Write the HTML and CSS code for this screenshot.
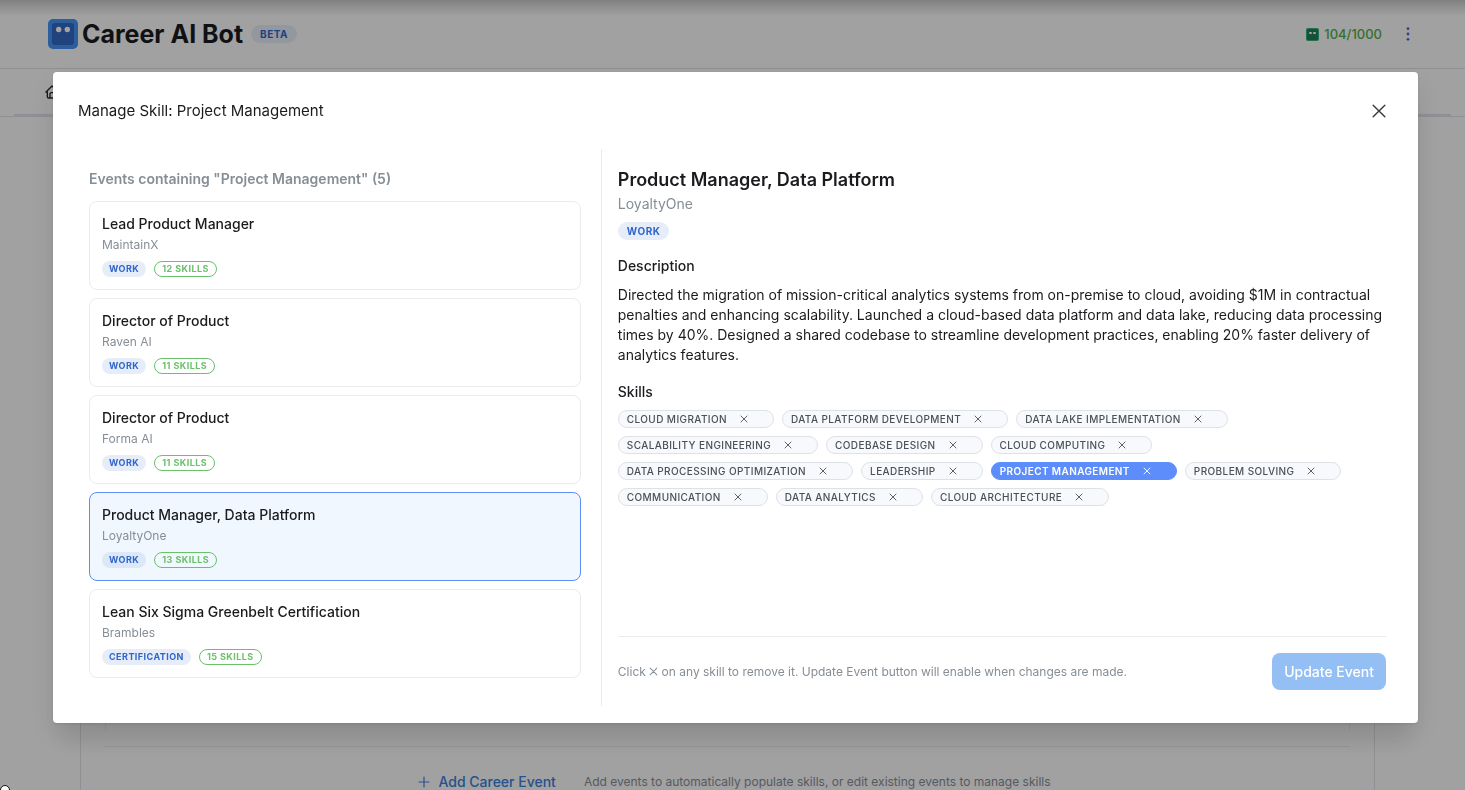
FILE: index.html
```html
<!DOCTYPE html>
<html lang="en">
<head>
    <meta charset="UTF-8">
    <meta name="viewport" content="width=device-width, initial-scale=1.0">
    <title>Career AI Bot</title>
    <link rel="stylesheet" href="styles.css">
</head>
<body>

<svg width="0" height="0" class="sprite" aria-hidden="true">
    <symbol id="x" viewBox="0 0 12 12">
        <path d="M1 1L11 11M11 1L1 11" fill="none" stroke="currentColor" stroke-width="1.200" stroke-linecap="round"/>
    </symbol>
    <symbol id="x-small" viewBox="0 0 8 8">
        <path d="M1 1L7 7M7 1L1 7" fill="none" stroke="currentColor" stroke-width=".9" stroke-linecap="round"/>
    </symbol>
</svg>

<div class="page">
    <header class="header">
        <svg class="logo" viewBox="0 0 30 30" aria-hidden="true">
            <rect width="30" height="30" rx="5" fill="#4293f5"/>
            <rect x="4" y="4" width="22" height="22" rx="3" fill="#3268c4"/>
            <circle cx="10.700" cy="10.500" r="2.700" fill="#fff"/>
            <circle cx="19.300" cy="10.500" r="2.700" fill="#fff"/>
        </svg>
        <h1 class="brand">Career AI Bot</h1>
        <span class="badge badge-beta">Beta</span>
        <div class="usage">
            <svg width="13" height="13" viewBox="0 0 13 13" aria-hidden="true">
                <rect width="13" height="13" rx="2" fill="#37b27c"/>
                <rect x="1" y="1" width="11" height="11" rx="1" fill="#257f5b"/>
                <rect x="3" y="4" width="3" height="2" rx="1" fill="#fff"/>
                <rect x="7" y="4" width="3" height="2" rx="1" fill="#fff"/>
            </svg>
            <span>104/1000</span>
        </div>
        <button class="menu" type="button" aria-label="Menu">
            <svg width="4" height="14" viewBox="0 0 4 14" fill="#5060e8">
                <circle cx="2" cy="1.700" r="1.400"/><circle cx="2" cy="7" r="1.400"/><circle cx="2" cy="12.300" r="1.400"/>
            </svg>
        </button>
    </header>
    <nav class="nav">
        <a href="#" class="home" aria-label="Home">
            <svg width="16" height="16" viewBox="0 0 24 24" fill="none" stroke="currentColor" stroke-width="2" stroke-linecap="round" stroke-linejoin="round">
                <path d="M5 12H3l9-9 9 9h-2M5 12v7a2 2 0 0 0 2 2h10a2 2 0 0 0 2-2v-7M9 21v-6a2 2 0 0 1 2-2h2a2 2 0 0 1 2 2v6"/>
            </svg>
        </a>
    </nav>
    <main class="main">
        <div class="events">
            <div class="events-list"></div>
            <div class="events-footer">
                <button class="add" type="button">
                    <svg width="12" height="12" viewBox="0 0 12 12" aria-hidden="true"><path d="M6 1v10M1 6h10" stroke="currentColor" stroke-width="1.200" stroke-linecap="round"/></svg>
                    Add Career Event
                </button>
                <span class="add-hint">Add events to automatically populate skills, or edit existing events to manage skills</span>
            </div>
        </div>
    </main>
</div>

<div class="overlay">
    <section class="modal" role="dialog" aria-labelledby="modalTitle">
        <header class="modal-header">
            <h2 id="modalTitle" class="modal-title">Manage Skill: Project Management</h2>
            <button class="close" type="button" aria-label="Close"><svg width="14" height="14"><use href="#x"/></svg></button>
        </header>
        <div class="modal-body">
            <div class="left">
                <h3 class="left-title">Events containing "Project Management" (5)</h3>
                <div class="cards">
                    <button class="card" type="button">
                        <span class="card-title">Lead Product Manager</span>
                        <span class="card-org">MaintainX</span>
                        <span class="badges"><span class="badge badge-sm">Work</span><span class="badge badge-sm badge-green">12 skills</span></span>
                    </button>
                    <button class="card" type="button">
                        <span class="card-title">Director of Product</span>
                        <span class="card-org">Raven AI</span>
                        <span class="badges"><span class="badge badge-sm">Work</span><span class="badge badge-sm badge-green">11 skills</span></span>
                    </button>
                    <button class="card" type="button">
                        <span class="card-title">Director of Product</span>
                        <span class="card-org">Forma AI</span>
                        <span class="badges"><span class="badge badge-sm">Work</span><span class="badge badge-sm badge-green">11 skills</span></span>
                    </button>
                    <button class="card active" type="button">
                        <span class="card-title">Product Manager, Data Platform</span>
                        <span class="card-org">LoyaltyOne</span>
                        <span class="badges"><span class="badge badge-sm">Work</span><span class="badge badge-sm badge-green">13 skills</span></span>
                    </button>
                    <button class="card" type="button">
                        <span class="card-title">Lean Six Sigma Greenbelt Certification</span>
                        <span class="card-org">Brambles</span>
                        <span class="badges"><span class="badge badge-sm">Certification</span><span class="badge badge-sm badge-green">15 skills</span></span>
                    </button>
                </div>
            </div>
            <div class="right">
                <h3 class="event-title">Product Manager, Data Platform</h3>
                <p class="event-org">LoyaltyOne</p>
                <span class="badge event-type">Work</span>
                <h4 class="label">Description</h4>
                <p class="description">Directed the migration of mission-critical analytics systems from on-premise to cloud, avoiding $1M in contractual penalties and enhancing scalability. Launched a cloud-based data platform and data lake, reducing data processing times by 40%. Designed a shared codebase to streamline development practices, enabling 20% faster delivery of analytics features.</p>
                <h4 class="label">Skills</h4>
                <div class="skills">
                    <span class="skill">Cloud Migration<button type="button" aria-label="Remove Cloud Migration"><svg width="8" height="8"><use href="#x-small"/></svg></button></span>
                    <span class="skill">Data Platform Development<button type="button" aria-label="Remove Data Platform Development"><svg width="8" height="8"><use href="#x-small"/></svg></button></span>
                    <span class="skill">Data Lake Implementation<button type="button" aria-label="Remove Data Lake Implementation"><svg width="8" height="8"><use href="#x-small"/></svg></button></span>
                    <span class="skill">Scalability Engineering<button type="button" aria-label="Remove Scalability Engineering"><svg width="8" height="8"><use href="#x-small"/></svg></button></span>
                    <span class="skill">Codebase Design<button type="button" aria-label="Remove Codebase Design"><svg width="8" height="8"><use href="#x-small"/></svg></button></span>
                    <span class="skill">Cloud Computing<button type="button" aria-label="Remove Cloud Computing"><svg width="8" height="8"><use href="#x-small"/></svg></button></span>
                    <span class="skill">Data Processing Optimization<button type="button" aria-label="Remove Data Processing Optimization"><svg width="8" height="8"><use href="#x-small"/></svg></button></span>
                    <span class="skill">Leadership<button type="button" aria-label="Remove Leadership"><svg width="8" height="8"><use href="#x-small"/></svg></button></span>
                    <span class="skill selected">Project Management<button type="button" aria-label="Remove Project Management"><svg width="8" height="8"><use href="#x-small"/></svg></button></span>
                    <span class="skill">Problem Solving<button type="button" aria-label="Remove Problem Solving"><svg width="8" height="8"><use href="#x-small"/></svg></button></span>
                    <span class="skill">Communication<button type="button" aria-label="Remove Communication"><svg width="8" height="8"><use href="#x-small"/></svg></button></span>
                    <span class="skill">Data Analytics<button type="button" aria-label="Remove Data Analytics"><svg width="8" height="8"><use href="#x-small"/></svg></button></span>
                    <span class="skill">Cloud Architecture<button type="button" aria-label="Remove Cloud Architecture"><svg width="8" height="8"><use href="#x-small"/></svg></button></span>
                </div>
                <footer class="actions">
                    <p class="hint">Click <svg width="9" height="9" role="img" aria-label="remove"><use href="#x-small"/></svg> on any skill to remove it. Update Event button will enable when changes are made.</p>
                    <button class="update" type="button" disabled>Update Event</button>
                </footer>
            </div>
        </div>
    </section>
    <span class="dot"></span>
</div>

</body>
</html>
```

FILE: styles.css
```css
* {
    box-sizing: border-box;
}

body {
    margin: 0;
    font-family: Inter, "Liberation Sans", sans-serif;
    font-size: 14px;
    line-height: 20px;
    color: #1a1b1e;
}

h1, h2, h3, h4, p {
    margin: 0;
    font-weight: 400;
}

button {
    font: inherit;
    color: inherit;
    background: none;
    border: 0;
    padding: 0;
}

.sprite {
    position: absolute;
}

/* page behind the modal */
.page {
    display: flex;
    flex-direction: column;
    height: 100vh;
    overflow: hidden;
    background: #fcfcfc;
}

.header {
    display: flex;
    align-items: center;
    height: 69px;
    padding: 0 52px 0 48px;
    border-bottom: 1px solid #dee2e6;
}

.logo {
    width: 30px;
    height: 30px;
}

.brand {
    margin-left: 4px;
    font-size: 25px;
    line-height: 32px;
    font-weight: 700;
}

.usage {
    display: flex;
    align-items: center;
    gap: 5px;
    margin-left: auto;
    font-size: 13px;
    font-weight: 500;
    color: #51b04c;
}

.menu {
    display: flex;
    justify-content: center;
    width: 10px;
    margin-left: 21px;
}

.nav {
    display: flex;
    align-items: center;
    height: 48px;
    padding: 0 0 2px 44px;
    border-bottom: 1px solid #dee2e6;
    background:
        linear-gradient(#dee2e6, #dee2e6) 50% 100% / calc(100% - 28px) 2px no-repeat;
}

.home {
    display: flex;
    color: #212529;
}

.main {
    display: flex;
    flex: 1;
    padding: 0 90px 0 80px;
}

.events {
    display: flex;
    flex: 1;
    flex-direction: column;
    padding: 0 24px;
    border: solid #dee2e6;
    border-width: 0 1px;
}

.events-list {
    flex: 1;
    margin-bottom: 16px;
    border: solid #e9ecef;
    border-width: 0 1px;
}

.events-footer {
    display: flex;
    align-items: flex-start;
    justify-content: center;
    gap: 28px;
    height: 44px;
    padding: 25px 0 0 14px;
    border-top: 1px solid #e9ecef;
}

.add {
    display: flex;
    align-items: center;
    gap: 8px;
    font-weight: 500;
    color: #3a80e0;
}

.add-hint {
    font-size: 12px;
    color: #868e96;
}

/* badges */
.badge {
    display: inline-flex;
    align-items: center;
    height: 18px;
    padding: 0 9px;
    border-radius: 9px;
    font-size: 10px;
    font-weight: 700;
    letter-spacing: .05em;
    text-transform: uppercase;
    color: #2f66cc;
    background: #e7edf8;
}

.badge-beta {
    margin-left: 8px;
}

.badge-sm {
    height: 16px;
    padding: 0 7px;
    font-size: 9px;
}

.badge-green {
    border: 1px solid #6ac16a;
    color: #6ac16a;
    background: none;
}

/* modal */
.overlay {
    position: fixed;
    inset: 0;
    display: flex;
    align-items: flex-start;
    padding: 72px 47px 0 53px;
    background:
        linear-gradient(rgba(0, 0, 0, .2), transparent 16px),
        rgba(0, 0, 0, .36);
}

.modal {
    flex: 1;
    min-width: 0;
    border-radius: 4px;
    background: #fff;
    box-shadow: 0 1px 3px rgba(0, 0, 0, .1), 0 28px 23px -7px rgba(0, 0, 0, .06), 0 12px 30px rgba(0, 0, 0, .1);
}

.modal-header {
    display: flex;
    align-items: center;
    justify-content: space-between;
    height: 77px;
    padding: 0 32px 0 25px;
}

.modal-title {
    font-size: 15px;
}

.close {
    display: flex;
    color: #343a40;
}

.modal-body {
    display: grid;
    grid-template-columns: 2fr 3fr;
    padding: 0 32px 17px 26px;
}

.left {
    padding: 20px 20px 28px 10px;
    border-right: 1px solid #e9ecef;
}

.left-title {
    font-size: 14px;
    font-weight: 600;
    color: #868e96;
}

.cards {
    display: flex;
    flex-direction: column;
    gap: 8px;
    margin-top: 12px;
}

.card {
    display: flex;
    flex-direction: column;
    padding: 12px;
    border: 1px solid #e9ecef;
    border-radius: 8px;
    text-align: left;
    background: #fff;
}

.card.active {
    border-color: #5c8dfa;
    background: #f0f7ff;
}

.card.active .badge:first-child {
    background: #dce8f8;
}

.card-title {
    font-weight: 500;
}

.card-org {
    margin-top: 1px;
    font-size: 12px;
    color: #868e96;
}

.badges {
    display: flex;
    gap: 8px;
    margin-top: 6px;
}

.right {
    display: flex;
    flex-direction: column;
    padding: 20px 0 0 16px;
}

.event-title {
    font-size: 18px;
    line-height: 22px;
    font-weight: 600;
}

.event-org {
    margin-top: 3px;
    color: #868e96;
}

.event-type {
    align-self: flex-start;
    margin-top: 8px;
}

.label {
    margin-top: 16px;
    font-size: 14px;
    font-weight: 500;
}

.description {
    margin: 9px 0 1px;
}

.skills {
    display: flex;
    flex-wrap: wrap;
    gap: 8px;
    margin-top: 8px;
}

.skill {
    display: inline-flex;
    align-items: center;
    height: 18px;
    padding: 0 20px 0 8px;
    border: 1px solid #dee2e6;
    border-radius: 9px;
    font-size: 10px;
    font-weight: 500;
    letter-spacing: .04em;
    text-transform: uppercase;
    color: #495057;
    background: #f8f9fc;
}

.skill button {
    display: flex;
    justify-content: center;
    width: 18px;
    margin-left: 8px;
}

.skill.selected {
    border-color: #5c8dfa;
    font-weight: 600;
    color: #fff;
    background: #5c8dfa;
}

.actions {
    display: flex;
    align-items: center;
    justify-content: space-between;
    margin-top: auto;
    padding: 16px 0;
    border-top: 1px solid #e9ecef;
}

.hint {
    font-size: 12px;
    color: #868e96;
}

.update {
    height: 37px;
    padding: 0 12px;
    border-radius: 8px;
    font-weight: 500;
    color: #fff;
    background: #94bff5;
}

.dot {
    position: absolute;
    left: 0;
    bottom: -5px;
    width: 10px;
    height: 10px;
    border: 1px solid #111;
    border-radius: 50%;
    background: #fff;
}
```
